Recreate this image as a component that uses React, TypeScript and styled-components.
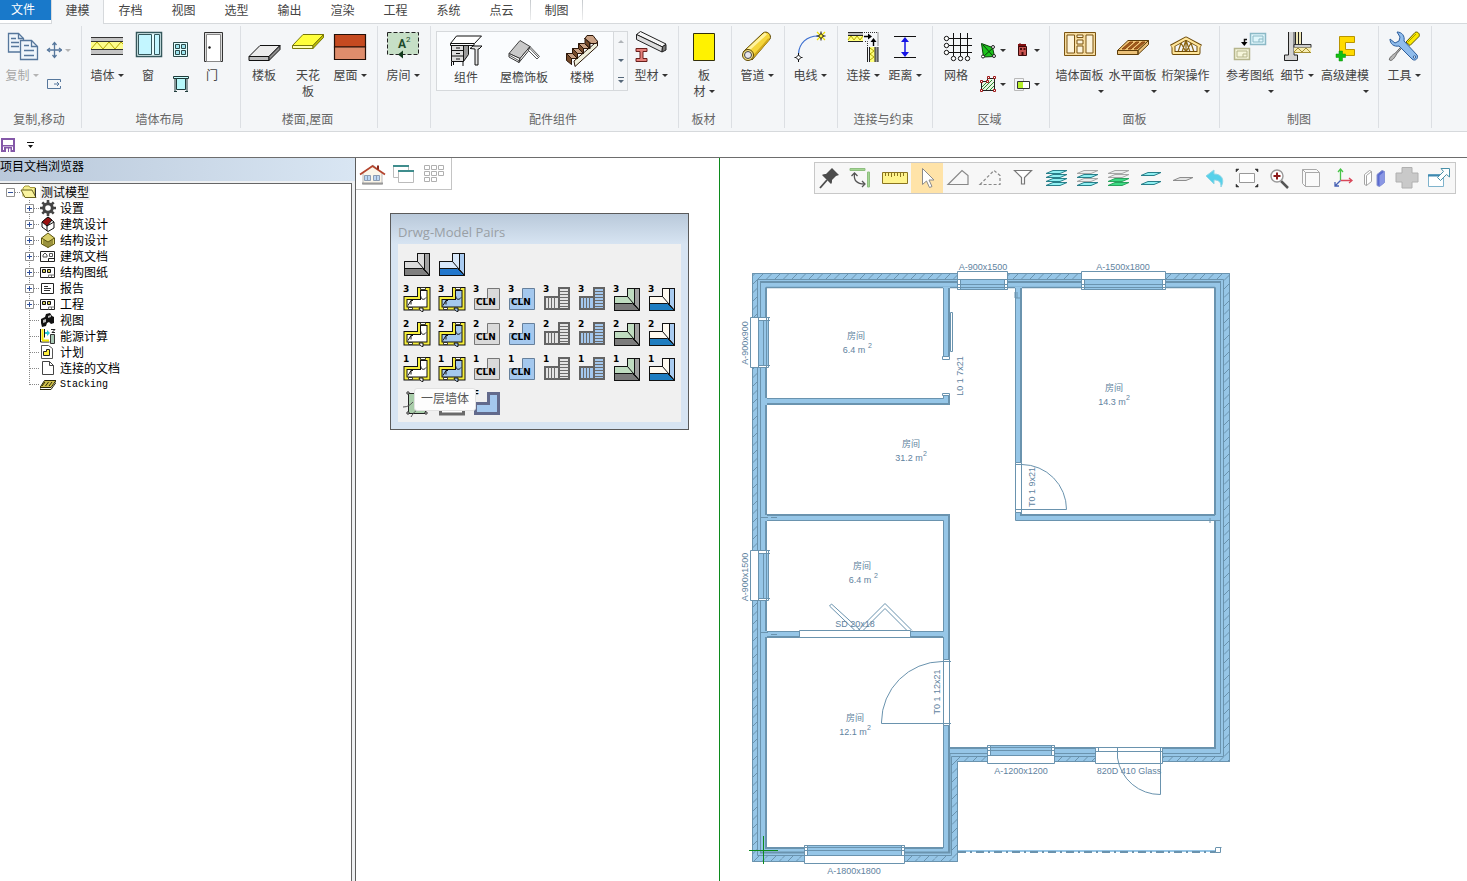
import React from "react";
import styled, { createGlobalStyle, css } from "styled-components";

const uiFont = `"Noto Sans CJK SC", "Open Sans", sans-serif`;
const LINE = "#6a93ae";
const WALL = "#96c6e7";

const GlobalStyle = createGlobalStyle`
  * { box-sizing: border-box; }
  body { margin: 0; font: 12px/16px ${uiFont}; color: #444; background: #fff; }
  button { font: inherit; color: inherit; background: none; border: 0; padding: 0; margin: 0; }
  svg { display: block; flex: none; }
`;

/* ---------- shell ---------- */

const Shell = styled.div`
  display: flex;
  flex-direction: column;
  height: 100vh;
  min-height: 640px;
  overflow: hidden;
`;

const TabBar = styled.nav`
  display: flex;
  height: 24px;
  flex: none;
  box-shadow: inset 0 -1px #d6d9dc;
`;

const FileTab = styled.button`
  width: 51px;
  height: 20px;
  padding: 0 5px 2px 0;
  color: #fff;
  background: #1979ca;
`;

const Tab = styled.button<{ $state?: "active" | "context" }>`
  width: 53px;
  height: 24px;
  padding-bottom: 5px;
  ${(p) =>
    p.$state === "active" &&
    css`
      background: #f4f6f8;
      border: solid #d6d9dc;
      border-width: 0 1px;
    `}
  ${(p) =>
    p.$state === "context" &&
    css`
      margin-left: 2px;
      height: 20px;
      padding-bottom: 1px;
      border: 1px solid;
      border-width: 0 1px;
      border-image: linear-gradient(#c4c8cc, #f0f0f0) 1;
    `}
`;

const Ribbon = styled.div`
  display: flex;
  flex: none;
  height: 108px;
  padding: 2px 0 3px;
  background: #f4f6f8;
  border-bottom: 1px solid #d6d9dc;
`;

const Group = styled.section<{ $w: number; $pad?: number }>`
  display: flex;
  flex-direction: column;
  flex: none;
  width: ${(p) => p.$w}px;
  padding-left: ${(p) => p.$pad ?? 0}px;
  border-right: 1px solid #dcdfe3;
`;

const GroupTools = styled.div`
  display: flex;
  align-items: flex-start;
  flex: 1;
  padding-top: 5px;
`;

const Caption = styled.div`
  height: 17px;
  padding-right: 3px;
  text-align: center;
  color: #666;
`;

const ToolButton = styled.button<{ $w: number; $off?: boolean; $tight?: boolean }>`
  display: flex;
  flex-direction: column;
  align-items: center;
  flex: none;
  gap: ${(p) => (p.$tight ? 2 : 4)}px;
  width: ${(p) => p.$w}px;
  color: ${(p) => (p.$off ? "#a6a6a6" : "#444")};
`;

const ToolLabel = styled.span`
  display: block;
  white-space: nowrap;
`;

const ArrowLine = styled.span`
  display: block;
  height: 16px;
  text-align: right;
`;

const CaretSvg = styled.svg`
  display: inline-block;
  vertical-align: 3px;
  margin-left: 3px;
`;

const SmallColumn = styled.div<{ $w: number }>`
  display: flex;
  flex-direction: column;
  gap: 16px;
  width: ${(p) => p.$w}px;
  padding-top: 10px;
`;

const SmallButton = styled.button<{ $center?: boolean }>`
  display: flex;
  align-items: center;
  justify-content: ${(p) => (p.$center ? "center" : "flex-start")};
  height: 18px;
`;

const Gallery = styled.div`
  display: flex;
  height: 60px;
  margin-left: 5px;
  background: #fafcfe;
  border: 1px solid #d6d9dc;
`;

const GalleryItems = styled.div`
  display: flex;
  padding: 3px 2px 0 0;
`;

const GalleryScroll = styled.div`
  display: flex;
  flex-direction: column;
  width: 14px;
  background: #f4f6f8;
  border-left: 1px solid #d6d9dc;
`;

const ScrollButton = styled.button`
  display: flex;
  flex: 1;
  align-items: center;
  justify-content: center;
`;

const QuickBar = styled.div`
  display: flex;
  align-items: center;
  gap: 12px;
  flex: none;
  height: 26px;
  padding-left: 1px;
  border-bottom: 1px solid #6d6d6d;
`;

const Main = styled.main`
  display: flex;
  flex: 1;
  min-height: 0;
`;

/* ---------- project browser ---------- */

const Browser = styled.aside`
  display: flex;
  flex-direction: column;
  flex: none;
  width: 356px;
  background: #eef0f2;
  border-right: 1px solid #5c5c5c;
`;

const BrowserTitle = styled.h2`
  height: 23px;
  margin: 0 0 2px;
  font: 12px/16px ${uiFont};
  color: #000;
  background: linear-gradient(90deg, #b9c8da, #d9e6f3);
`;

const TreeBox = styled.div`
  flex: 1;
  margin-right: 3px;
  background: #fff;
  border: solid #666;
  border-width: 1px 1px 0 0;
`;

const TreeList = styled.ul`
  margin: 0;
  padding: 0;
  list-style: none;
  color: #000;
`;

const TreeRow = styled.div<{ $child?: boolean }>`
  display: flex;
  align-items: center;
  height: 16px;
  padding-left: ${(p) => (p.$child ? 22 : 3)}px;
`;

const TreeText = styled.span<{ $selected?: boolean; $latin?: boolean }>`
  height: 16px;
  padding: 0 1px;
  margin-left: 3px;
  background: ${(p) => (p.$selected ? "#efefef" : "none")};
  ${(p) =>
    p.$latin &&
    css`
      font: 10px/18px "Liberation Mono", monospace;
    `}
`;

/* ---------- drawing area ---------- */

const Canvas = styled.section`
  position: relative;
  flex: 1;
  min-width: 0;
  overflow: hidden;
  background: #fff;
`;

const PlanSvg = styled.svg`
  position: absolute;
  inset: 0;
  width: 100%;
  height: 100%;
`;

const CanvasBar = styled.div`
  position: relative;
  display: flex;
  justify-content: space-between;
  align-items: flex-start;
  padding-right: 11px;
`;

const ViewBar = styled.div`
  display: flex;
  height: 32px;
  padding-right: 2px;
  background: #fff;
  border: solid #c4c4c4;
  border-width: 0 1px 1px 0;
`;

const ViewButton = styled.button`
  width: 31px;
  height: 31px;
`;

const EditBar = styled.div`
  display: flex;
  height: 32px;
  margin-top: 4px;
  background: #f7f7f7;
  border: 1px solid #c8c8c8;
`;

const EditButton = styled.button<{ $on?: boolean }>`
  width: 32px;
  height: 30px;
  background: ${(p) => (p.$on ? "#ffe3a8" : "none")};
`;

const Palette = styled.div`
  position: absolute;
  left: 34px;
  top: 55px;
  width: 299px;
  padding: 0 7px 7px;
  background: linear-gradient(#b9c9da, #d7e4f2 30px);
  border: 1px solid #5a5a5a;
`;

const PaletteTitle = styled.h3`
  height: 30px;
  margin: 0;
  padding-top: 9px;
  font: 13px/18px "Open Sans", sans-serif;
  color: #999fa5;
`;

const PaletteBody = styled.div`
  padding: 3px 1px 0;
  height: 178px;
  background: #f0f0f0;
`;

const PaletteRow = styled.div`
  display: flex;
`;

const PaletteButton = styled.button`
  width: 35px;
  height: 35px;
`;

const Tooltip = styled.div`
  position: absolute;
  left: 58px;
  top: 230px;
  padding: 1px 6px 4px;
  color: #575757;
  background: #fdfdfd;
  border: 1px solid #e2e2e2;
  border-radius: 3px;
`;

/* ---------- ribbon pieces ---------- */

const Caret = ({ color = "#333" }: { color?: string }) => (
  <CaretSvg width="6" height="3" viewBox="0 0 6 3">
    <path d="M0 0h6L3 3z" fill={color} />
  </CaretSvg>
);

type ToolProps = {
  w: number;
  icon: React.ReactNode;
  label: React.ReactNode;
  arrow?: "inline" | "below";
  off?: boolean;
  tight?: boolean;
};

const Tool = ({ w, icon, label, arrow, off, tight }: ToolProps) => (
  <ToolButton $w={w} $off={off} $tight={tight} disabled={off}>
    <svg width="32" height="32" viewBox="0 0 32 32" overflow="visible">
      {icon}
    </svg>
    <ToolLabel>
      {label}
      {arrow === "inline" && <Caret color={off ? "#b4b4b4" : "#333"} />}
      {arrow === "below" && (
        <ArrowLine>
          <Caret />
        </ArrowLine>
      )}
    </ToolLabel>
  </ToolButton>
);

const Small = ({
  name,
  icon,
  arrow,
  center,
  color,
}: {
  name: string;
  icon: React.ReactNode;
  arrow?: boolean;
  center?: boolean;
  color?: string;
}) => (
  <SmallButton aria-label={name} $center={center}>
    <svg width="18" height="18" viewBox="0 0 18 18">
      {icon}
    </svg>
    {arrow && <Caret color={color} />}
  </SmallButton>
);

const icons = {
  copy: (
    <g fill="#eef5fb" stroke="#56779c" strokeWidth="1.3">
      <path d="M2.5 2.5h10l5 5v13.500h-15z" />
      <path d="M12.500 2.500v5h5M5 7.500h5M5 11.500h8M5 15.500h8" fill="none" />
      <path d="M14.500 9.500h11l6 6v13h-17z" />
      <path d="M25.500 9.500v6h6M18 14.500h5M18 19.500h10M18 24.500h10" fill="none" />
    </g>
  ),
  wall: (
    <g>
      <path d="M0 6h32v18H0z" fill="#fdfd8c" />
      <path d="M0 7h32v4H0zM0 19h32v4H0z" fill="#c4c4c4" />
      <path d="M0 6.500h32M0 10.500h32M0 18.500h32M0 23.500h32" stroke="#333" />
      <path d="M0 18l6-7 6 7 6-7 6 7 6-7 2 2" fill="none" stroke="#b5a800" />
    </g>
  ),
  window: (
    <g stroke="#35585c">
      <path d="M4.500 1.500h25v24h-25z" fill="#e8feff" strokeWidth="1.500" />
      <path d="M6.500 3.500h13v20h-13zM22.500 3.500h5v20h-5z" fill="#c3f6ff" />
    </g>
  ),
  door: (
    <g stroke="#333">
      <path d="M8.500 1.500h18v29h-18z" fill="#dcdcdc" />
      <path d="M10.500 3.500h14v27h-14z" fill="#fff" stroke="#888" />
      <circle cx="13.500" cy="16.500" r="1.200" fill="#111" stroke="none" />
    </g>
  ),
  slab: (
    <g stroke="#111" strokeLinejoin="round">
      <path d="M1 25.500L12 14.500h20l-11 11z" fill="#ececec" />
      <path d="M1 25.500h20v4H1z" fill="#bdbdbd" />
      <path d="M21 25.500l11-11v4l-11 11z" fill="#8b8b8b" />
    </g>
  ),
  ceiling: (
    <g stroke="#77770a" strokeLinejoin="round">
      <path d="M0.500 14.500L11 3.500h20.500L21 14.500z" fill="#ffff3c" />
      <path d="M0.500 14.500H21v3H0.500z" fill="#ffffb4" />
      <path d="M21 14.500l10.500-11v3L21 17.500z" fill="#c0c000" />
    </g>
  ),
  roof: (
    <g stroke="#241008" strokeWidth="1.200">
      <path d="M.500 3.500h31v12.500H.500z" fill="#c54a20" />
      <path d="M.500 16h31v12.500H.500z" fill="#df8d6c" />
    </g>
  ),
  room: (
    <g>
      <path d="M.500 1.500h31v22H.500z" fill="#c6dfc6" stroke="#222" strokeDasharray="4 2" />
      <text x="11" y="17" fontSize="12" fontWeight="700" fontFamily="Roboto, sans-serif" fill="#1d4a2a">A</text>
      <text x="19" y="11" fontSize="8" fontFamily="Roboto, sans-serif" fill="#1d4a2a">2</text>
      <path d="M11 23.500l5-4v8z" fill="#123a1c" />
    </g>
  ),
  desk: (
    <g stroke="#111" strokeLinejoin="round">
      <path d="M.500 8.500l6-7.500h25l-7 7.500z" fill="#fff" />
      <path d="M1.500 10.500h12v16h-12z" fill="#ddd" />
      <path d="M13.500 10.500l5 0v9l-5 7z" fill="#999" />
      <path d="M1.500 15.500h12M1.500 21h12M6 13h4M6 18.500h4M6 24h4M1.500 27v4M3.500 27v3M13 27v4M.500 8.500v2H24v-2" fill="none" />
      <path d="M20 13.500l3-2.500h9l-3 3h-1v16h-3v-16z" fill="#e5e5e5" />
    </g>
  ),
  eave: (
    <g strokeLinejoin="round">
      <path d="M1 18.500L12 5.500l10 6-10 12z" fill="#c9c9c9" stroke="#444" />
      <path d="M1 18.500v3.500l10 5.500 1-4zM12 23.500l-1 4 9-11 2-5z" fill="#fff" stroke="#333" />
      <path d="M1 20l10.500 6M22 11.500l9.500 10M20.500 15.500l8.500 8.500 2.500-2.500M21.500 13l9 9.500" fill="none" stroke="#555" />
    </g>
  ),
  stairs: (
    <g stroke="#2b170a" strokeLinejoin="round">
      <path d="M9 31.500L31.500 11V6L8 26z" fill="#f0f0dc" />
      <path d="M.500 18.500h6l5 5h-6zM6.500 13.500h6l5 5h-6zM12.500 8.500h6l5 5h-6zM19 3.500l-.500 0h.500l6 0 0 0 5 5h-6z" fill="#c9a184" />
      <path d="M.500 18.500l5 5v6l-5-4zM6.500 13.500l5 5v5l-5-5zM12.500 8.500l5 5v5l-5-5zM19 3.500l5 5v5l-5-5z" fill="#754a2a" />
      <path d="M19 3.500L21 .500h6l4.500 6-1.500 2h-5z" fill="#c9a184" />
      <path d="M5.500 29.500v-6h6v-5h6v-5h6v-5h7" fill="none" />
    </g>
  ),
  profile: (
    <g strokeLinejoin="round">
      <path d="M1.500 3.500l4-3L31 13l-3.500 3z" fill="#f6f6f6" stroke="#222" />
      <path d="M1.500 3.500v5l25.500 12.500.5-5z" fill="#dedede" stroke="#222" />
      <path d="M27.500 15.500l3.500-2v5.500l-4 2z" fill="#777" stroke="#222" />
      <path d="M1 17.500h11v3H8v7h4v3H1v-3h4v-7H1z" fill="#e5807a" stroke="#6a1f1c" />
    </g>
  ),
  board: <path d="M5.500 2.500h21v27h-21z" fill="#fff200" stroke="#33300a" />,
  pipe: (
    <g stroke="#5a4300">
      <path d="M2 21L22 2c4-3 9 2 7 6L11 29z" fill="#f5d63b" />
      <path d="M7 19L25 2.500" stroke="#fff3a0" strokeWidth="3" />
      <path d="M13 25L28 8" stroke="#d0a81c" strokeWidth="2" />
      <circle cx="7" cy="24" r="5.500" fill="#fbe88a" />
      <circle cx="7" cy="24" r="3.500" fill="#e6e6ee" stroke="#444" />
    </g>
  ),
  wire: (
    <g fill="none">
      <path d="M4.500 23C5 12 13 5 24 5" stroke="#3c6fd0" strokeWidth="1.200" />
      <path d="M23 1l8 8M31 1l-8 8" stroke="#f0e000" strokeWidth="1.200" />
      <path d="M22.500 5h9M27 .500v9M.500 26.500h8M4.500 22v9" stroke="#111" />
      <path d="M27 2.500L29.500 5 27 7.500 24.500 5z" fill="#ffef3a" stroke="#111" />
      <path d="M4.500 24l2.500 2.500L4.500 29 2 26.500z" fill="#fff" stroke="#111" />
    </g>
  ),
  connect: (
    <g>
      <path d="M1 1h15v3H1z" fill="#b8b8b8" />
      <path d="M1 4h15v6H1z" fill="#ffff7d" />
      <path d="M1 1.500h15M1 4.500h15M1 10.500h15" stroke="#222" />
      <path d="M1 9l3-4 3 4 3-4 3 4 3-4" fill="none" stroke="#b5a800" />
      <path d="M28 16h3v15h-3z" fill="#999" />
      <path d="M22 16h6v15h-6z" fill="#ffff7d" />
      <path d="M20.500 16v15M22.500 16v15M28 16v15M31 16v15" stroke="#222" />
      <path d="M23 17l4 3-4 3 4 3-4 3" fill="none" stroke="#b5a800" />
      <path d="M17 1.500h14v14M20.500 15v-4.500H17" fill="none" stroke="#333" strokeDasharray="1 1" />
      <path d="M17 5.500h5M26.500 15v-5" stroke="#000" strokeWidth="1.400" />
      <path d="M21 2.500l4 3-4 3zM23.500 11l3-4 3 4z" />
    </g>
  ),
  distance: (
    <g>
      <path d="M5 5.500h22M5 26.500h22" stroke="#111" />
      <path d="M16 8v16" stroke="#1414e6" strokeWidth="1.500" />
      <path d="M16 6l4 5h-8zM16 26l4-5h-8z" fill="#1414e6" />
    </g>
  ),
  grid: (
    <g fill="none" stroke="#111">
      <path d="M13.500 2v23M20.500 2v23M27.500 2v23M9 7.500h23M9 14.500h23M9 21.500h23" />
      <g fill="#fff">
        <circle cx="6.500" cy="7.500" r="2.200" />
        <circle cx="6.500" cy="14.500" r="2.200" />
        <circle cx="6.500" cy="21.500" r="2.200" />
        <circle cx="13.500" cy="27.500" r="2.200" />
        <circle cx="20.500" cy="27.500" r="2.200" />
        <circle cx="27.500" cy="27.500" r="2.200" />
      </g>
    </g>
  ),
  wallPanel: (
    <g fill="#fdf4dc" stroke="#7b5512">
      <path d="M.500 1.500h31v23H.500z" fill="#f6dca0" />
      <path d="M3 4h7.500v18H3zM13 4h6v2.500h-6zM13 9h6v4h-6zM13 15h6v7h-6zM22 4h7v18h-7z" />
    </g>
  ),
  floorPanel: (
    <g stroke="#5c3c08" strokeLinejoin="round">
      <path d="M.500 19.500L11 9.500h20.500L21 19.500z" fill="#f5c878" />
      <path d="M.500 19.500H21v4H.500zM21 19.500l10.500-10v4L21 23.500z" fill="#ecc27a" />
      <path d="M5 18l8-7h3l-8 7zM11 18l8-7h3l-8 7zM17 18l8-7h3l-8 7z" fill="#a45a1c" stroke="#8a4a12" />
    </g>
  ),
  truss: (
    <g fill="none" strokeLinejoin="round">
      <path d="M16 8v13M8 21l3-9 5 9 5-9 3 9M12 21l4-12 4 12" stroke="#8a6410" strokeWidth="1.200" />
      <path d="M1 15.500L16 7.500l15 8M3.500 15v7h25v-7" stroke="#6e4a08" strokeWidth="4" />
      <path d="M1.500 15.500L16 7.500l14.500 8M3.500 14.500v7.500h25v-7.500" stroke="#ffe69a" strokeWidth="2" />
    </g>
  ),
  reference: (
    <g>
      <path d="M16.500 2.500h15v11h-15z" fill="#dff6fb" stroke="#8bb9c6" strokeWidth="1.500" />
      <path d="M19 5h10v6H19zM25 8h4M25 11V8" fill="none" stroke="#8bb9c6" />
      <path d="M.500 17.500h15v11H.500z" fill="#f5f5da" stroke="#b5b58c" strokeWidth="1.500" />
      <path d="M3 20h10v6H3zM9 23h4M9 26v-3" fill="none" stroke="#b5b58c" />
      <path d="M13 8.500h-2.500V12" fill="none" stroke="#111" strokeWidth="1.500" />
      <path d="M7 11h6.500l-3.200 4z" />
    </g>
  ),
  detail: (
    <g>
      <path d="M15 1h5v12h-5z" fill="#efe8b8" />
      <path d="M8 1h4v23h5v6H3v-6h5z" fill="#d4d4d4" />
      <path d="M7.500 1v23h-4v5.500h13V24H13V1M14.500 1v12M17.500 1v12M20.500 1v12" fill="none" stroke="#222" />
      <path d="M13 13.500h17v3H13z" fill="#ccc" stroke="#333" />
      <path d="M13 16.500h17v5H13z" fill="#f7edb0" />
      <path d="M13 21l4-4 4 4 4-4 4 4M13 21.500h17" fill="none" stroke="#a48d30" />
    </g>
  ),
  advanced: (
    <g>
      <path d="M10.500 5.500h15v6h-9v7h9v6h-15z" fill="#ffda00" stroke="#b89500" />
      <path d="M10 20v3H7v3.500h3v3.500h3.500v-3.500h3V23h-3v-3z" fill="#12c012" stroke="#0e8f0e" strokeWidth=".500" />
    </g>
  ),
  tools: (
    <g strokeLinejoin="round">
      <path d="M18 11l9-9.500c2-1.500 5.500 1 4 4L22 14.500z" fill="#fbe900" stroke="#5d5600" />
      <path d="M20 11l8-8" stroke="#a49a00" />
      <path d="M1.500 29c-1-2 4-6 6-7l7-8 1 1-7 8c-1 3-5 8-7 6z" fill="#b6b6b6" stroke="#666" />
      <path d="M9 1c5 0 8 4 7 9l13 14c2 3-2 7-5 4L11 15c-5 1-9-2-9-7l5 4 4-2 1-4z" fill="#8fbcec" stroke="#2d5e9c" />
      <circle cx="26.500" cy="26" r="1.200" fill="#fff" stroke="#2d5e9c" />
    </g>
  ),
};

const smallIcons = {
  move: (
    <g stroke="#56779c" fill="none" strokeWidth="1.300">
      <path d="M10.500 2v14M3.500 9h14" />
      <path d="M8.500 4l2-2.500 2 2.500M8.500 14l2 2.500 2-2.500M6 7L3.500 9 6 11M15 7l2.500 2-2.500 2" />
    </g>
  ),
  stretch: (
    <g stroke="#56779c" fill="none">
      <path d="M16.500 7V4.500h-13v9h13V11M10 9h5M13 7l2 2-2 2" />
    </g>
  ),
  pane: (
    <g stroke="#2c4a4a">
      <path d="M1.500 1.500h14v14h-14z" fill="#e0ffff" />
      <path d="M3.500 3.500h4v4h-4zM9.500 3.500h4v4h-4zM3.500 9.500h4v4h-4zM9.500 9.500h4v4h-4z" fill="#9ee6f0" />
    </g>
  ),
  opening: (
    <g stroke="#1f3a3a">
      <path d="M1.500 1.500h15v2h-15zM3 3.500v13M15 3.500v13" fill="#c8ffff" />
      <path d="M4.500 3.500h9v11h-9z" fill="#b6f8fa" />
      <path d="M2 16.500h3M13 16.500h3" />
    </g>
  ),
  areaFill: (
    <g>
      <path d="M2.500 2.500l11 4 2 9-11 .500z" fill="#1dc31d" stroke="#0a3d0a" />
      <path d="M4 4l10 11M14 7l-9 8" stroke="#0a3d0a" />
      <circle cx="15" cy="15" r="1.500" fill="#fff" stroke="#222" />
      <circle cx="14" cy="6" r="1.500" fill="#fff" stroke="#222" />
      <circle cx="4" cy="15.500" r="1.500" fill="#fff" stroke="#222" />
    </g>
  ),
  areaHatch: (
    <g>
      <path d="M2.500 6.500h6v-3h7v12h-13z" fill="#e9f5e5" stroke="#222" />
      <path d="M3 12l5-5M3 15L13 5M7 15l8-8M11 15l4-4" stroke="#2d8a2d" />
      <path d="M1.500 5.500h2v2h-2zM7.500 5.500h2v2h-2zM8.500 1.500h2v2h-2zM14.500 1.500h2v2h-2zM14.500 14.500h2v2h-2zM1.500 14.500h2v2h-2z" fill="#fff" stroke="#a01818" />
    </g>
  ),
  building: (
    <g>
      <path d="M5 3h1l1-1 1 1h5v3H5z" fill="#7e1010" />
      <path d="M5.500 5.500h8v9h-8z" fill="#c85450" stroke="#3a0a0a" />
      <path d="M7 7h2v2H7zM10.500 7h2v2h-2zM8.500 11h2v3.500h-2z" fill="#4a0c0c" />
    </g>
  ),
  overlap: (
    <g>
      <path d="M1.500 3.500h9v12h-9z" fill="none" stroke="#b9b9b9" />
      <path d="M4.500 6.500h12v7h-12z" fill="#fff" stroke="#333" />
      <path d="M5 7h5v6H5z" fill="#b6f02a" />
    </g>
  ),
};

/* ---------- tree ---------- */

const ExpandBox = ({ x, minus }: { x: number; minus?: boolean }) => (
  <g>
    <path d={`M${x + 0.5} 4.500h8v8h-8z`} fill="#fff" stroke="#919191" />
    <path d={`M${x + 2} 8.500h5${minus ? "" : `M${x + 4.5} 6v5`}`} stroke="#2f4f9b" />
  </g>
);

const sheet = <path d="M.500 3.500h14v10H.500z" fill="#fff" stroke="#222" />;

const drawingSheet = (
  <g>
    {sheet}
    <path d="M2.500 5.500h3v3h-3zM7.500 5.500h3v3h-3z" fill="#d8d05c" stroke="#111" />
    <path d="M8.500 13.500v-2.500h6M11.500 11v2" fill="none" stroke="#777" />
  </g>
);

const treeItems: { text: string; leaf?: boolean; latin?: boolean; icon: React.ReactNode }[] = [
  {
    text: "设置",
    icon: (
      <g>
        <circle cx="8" cy="8" r="4.300" fill="none" stroke="#444" strokeWidth="3" />
        <path d="M8 0v3M8 13v3M0 8h3M13 8h3M2.300 2.300l2 2M11.700 11.700l2 2M2.300 13.700l2-2M11.700 4.300l2-2" stroke="#444" strokeWidth="2.600" />
      </g>
    ),
  },
  {
    text: "建筑设计",
    icon: (
      <g stroke="#111" strokeLinejoin="round">
        <path d="M2 6l6-5 6 5v6l-6 3.500L2 11z" fill="#fff" />
        <path d="M2 6l6-5 4 3-5 6z" fill="#9a1010" />
        <path d="M7 10v5M7 10l7-4" />
      </g>
    ),
  },
  {
    text: "结构设计",
    icon: (
      <g stroke="#5b5410" strokeLinejoin="round">
        <path d="M1.500 6l6.500-5 6.500 5v6L8 15.500 1.500 12z" fill="#d9cf6a" />
        <path d="M1.500 6L8 10l6.500-4M8 10v5.500M4 8v5M6 9v5M10 9v5M12 8v5" fill="none" />
      </g>
    ),
  },
  {
    text: "建筑文档",
    icon: (
      <g>
        {sheet}
        <path d="M3 9V7l2-2 2 2v2zM9.500 5.500h3v3h-3z" fill="none" stroke="#555" />
        <path d="M8.500 13.500v-3h6" fill="none" stroke="#222" />
      </g>
    ),
  },
  { text: "结构图纸", icon: drawingSheet },
  {
    text: "报告",
    icon: (
      <g>
        <path d="M1.500 3.500h12v10h-12z" fill="#fff" stroke="#222" />
        <path d="M4 6.500h4M4 8.500h7M4 10.500h6" stroke="#333" />
      </g>
    ),
  },
  { text: "工程", icon: drawingSheet },
  {
    text: "视图",
    leaf: true,
    icon: (
      <g>
        <path d="M1 7l4-2 1-3 4-1 2 3 2 1v6l-3 1-2-2-2 1-1 3-4 1-1-4z" fill="#111" />
        <path d="M3 8l3-1v3l-3 1zM8 4l3-1v2L8 6z" fill="#b8b8b8" />
      </g>
    ),
  },
  {
    text: "能源计算",
    leaf: true,
    icon: (
      <g>
        <path d="M.500 1v13h9M4.500 1v8.500" fill="none" stroke="#111" />
        <path d="M2.500 1v11M2 12.500h7" stroke="#f2e600" strokeWidth="2" />
        <path d="M5 4h2V2l3 3-3 3V6H5z" fill="#25c6d6" />
        <path d="M10.500 6.500h4v9h-4z" fill="#a9c9b5" stroke="#333" />
        <path d="M11 1.500h4l-3 3h3" fill="none" stroke="#222" />
      </g>
    ),
  },
  {
    text: "计划",
    leaf: true,
    icon: (
      <g>
        <path d="M1.500 1.500h7l4 3v10h-11z" fill="#fff" stroke="#555" />
        <path d="M3.500 7.500h3v-2h3v6h-6z" fill="#ffef3c" stroke="#222" />
      </g>
    ),
  },
  {
    text: "连接的文档",
    leaf: true,
    icon: (
      <g>
        <path d="M2.500 1.500h7l4 4v9h-11z" fill="#fff" stroke="#444" />
        <path d="M9.500 1.500v4h4" fill="none" stroke="#444" />
      </g>
    ),
  },
  {
    text: "Stacking",
    leaf: true,
    latin: true,
    icon: (
      <g stroke="#2c2a0a" strokeLinejoin="round">
        <path d="M0 11.500L4.500 4.500H16L11 11.500z" fill="#cfc04a" />
        <path d="M0 11.500v2h11l5-7v-2M5 6l-3 4M8.500 6l-3 4M12 6L9 10" fill="none" />
      </g>
    ),
  },
];

const Tree = () => (
  <TreeList role="tree">
    <li role="treeitem" aria-expanded="true">
      <TreeRow>
        <button aria-label="折叠">
          <svg width="17" height="16" viewBox="0 0 17 16">
            <path d="M12 8.500h5" stroke="#888" strokeDasharray="1 1" />
            <ExpandBox x={3} minus />
          </svg>
        </button>
        <svg width="17" height="16" viewBox="-1 0 17 16">
          <path d="M2 12.500V4l2-2h4l1 1.500h5v9" fill="#f4ee8e" stroke="#a59a3a" />
          <path d="M0 6h11l4 7.500H4z" fill="#faf4a0" stroke="#6b6420" />
          <path d="M14.500 4v9" stroke="#333" />
        </svg>
        <TreeText $selected>测试模型</TreeText>
      </TreeRow>
      <TreeList role="group">
        {treeItems.map((it, i) => {
          const last = i === treeItems.length - 1;
          const guide = (
            <svg width="18" height="16" viewBox="0 0 18 16">
              <path d={`M7.500 0v${last ? 9 : 16}M8 8.500h10`} stroke="#888" strokeDasharray="1 1" />
              {!it.leaf && <ExpandBox x={3} />}
            </svg>
          );
          return (
            <li key={it.text} role="treeitem">
              <TreeRow $child>
                {it.leaf ? guide : <button aria-label={"展开" + it.text}>{guide}</button>}
                <svg width="16" height="16" viewBox="0 0 16 16">
                  {it.icon}
                </svg>
                <TreeText $latin={it.latin}>{it.text}</TreeText>
              </TreeRow>
            </li>
          );
        })}
      </TreeList>
    </li>
  </TreeList>
);

/* ---------- view and edit bars ---------- */

const viewIcons: [string, React.ReactNode][] = [
  [
    "主页",
    <g>
      <path d="M7 15v11h19V15l-9-8z" fill="#fbf6ea" stroke="#bbb" />
      <path d="M6 25.500h21" stroke="#999" strokeWidth="2" />
      <path d="M4 16.500l12.500-8.500L29 16.500" fill="none" stroke="#b5452e" strokeWidth="1.800" />
      <path d="M21 7.500h2v4h-2z" fill="#8b2a1c" />
      <path d="M8.500 17.500h6v5h-6zM17.500 17.500h6v5h-6z" fill="#bcd6f3" stroke="#8b9db5" />
      <path d="M11.500 17.500v5M20.500 17.500v5" stroke="#8b9db5" />
    </g>,
  ],
  [
    "窗口",
    <g>
      <path d="M6.500 7.500h15v12h-15z" fill="#fff" stroke="#bbb" />
      <path d="M6 8h16" stroke="#3f8d8d" strokeWidth="2" />
      <path d="M11.500 12.500h15v12h-15z" fill="#fff" stroke="#bbb" />
      <path d="M11 13h16" stroke="#3f8d8d" strokeWidth="2" />
    </g>,
  ],
  [
    "平铺",
    <path
      d="M6.500 7.500h5v4h-5zM13.500 7.500h5v4h-5zM20.500 7.500h5v4h-5zM6.500 13.500h5v4h-5zM13.500 13.500h5v4h-5zM20.500 13.500h5v4h-5zM6.500 19.500h5v4h-5zM13.500 19.500h5v4h-5z"
      fill="none"
      stroke="#b0b0b0"
    />,
  ],
];

const Layers = ({ x, tones }: { x: number; tones: string[] }) => (
  <g>
    {tones
      .map((t, i) => ({ t, y: 7 + i * 4 }))
      .reverse()
      .map(({ t, y }) => (
        <path
          key={y}
          d={`M${x} ${y + 3.5}l7-3h14l-7 3z`}
          fill={t === "teal" ? "#8ff0f2" : t === "green" ? "#3ddc84" : "#ececec"}
          stroke={t === "teal" ? "#287f8a" : t === "green" ? "#2aa35e" : "#a6a6a6"}
        />
      ))}
  </g>
);

const editIcons: [string, React.ReactNode][] = [
  [
    "固定",
    <g>
      <path d="M17 5l7 7-3 1-4 4c0 2 0 3-1 4l-9-9c1-1 3-1 4-1l4-4z" fill="#4c4c4c" />
      <path d="M12 17l-7 8" stroke="#4c4c4c" strokeWidth="1.800" />
    </g>,
  ],
  [
    "旋转",
    <g fill="none">
      <path d="M3 5.500h15v2H3zM20.500 9h2v15h-2z" fill="#a4d694" stroke="#8fbf80" />
      <path d="M7.500 11c-1 6 2 10 10 10" stroke="#555" strokeWidth="1.300" />
      <path d="M4.500 13l3-3 3 3M15 18l3 3-3 3" stroke="#555" strokeWidth="1.300" />
    </g>,
  ],
  [
    "测量",
    <g>
      <path d="M3.500 9.500h25v11h-25z" fill="#fff48c" stroke="#8a7420" />
      <path d="M6.500 10v3M9.500 10v3M12.500 10v4M15.500 10v3M18.500 10v3M21.500 10v4M24.500 10v3" stroke="#8a7420" />
    </g>,
  ],
  ["选择", <path d="M11.500 5.500v16l4-3.500 3 6.500 2.500-1-3-6.500h5z" fill="#fff" stroke="#8a8a8a" />],
  ["多边形", <path d="M5 21.500L19 7.500l6 5v9z" fill="none" stroke="#888" strokeWidth="1.200" />],
  ["虚线多边形", <path d="M5 21.500L19 7.500l6 5v9z" fill="none" stroke="#888" strokeWidth="1.200" strokeDasharray="3 2" />],
  ["筛选", <path d="M7.500 7.500h17l-7 7v6.500h-3V14.500z" fill="#fff" stroke="#777" strokeWidth="1.200" />],
  ["图层一", <Layers x={7} tones={["teal", "teal", "teal", "teal"]} />],
  ["图层二", <Layers x={6} tones={["grey", "teal", "grey", "teal"]} />],
  ["图层三", <Layers x={5} tones={["grey", "grey", "green", "green"]} />],
  [
    "图层四",
    <g fill="#8ff0f2" stroke="#287f8a">
      <path d="M6 12.500l7-3h13l-7 3zM6 21.500l7-3h13l-7 3z" />
    </g>,
  ],
  ["图层五", <path d="M6 17.500l7-3h13l-7 3z" fill="#e4e4e4" stroke="#8d8d8d" />],
  ["撤销", <path d="M7 13l8-6v4c8 0 11 6 7 13 0-5-2-7-7-7v4z" fill="#57d1ea" stroke="#8fd6e6" />],
  [
    "缩放范围",
    <g>
      <path d="M8.500 10.500h15v9h-15z" fill="#fff" stroke="#999" />
      <path d="M5 9V6h3zM24 6h3v3zM5 21v3h3zM27 21v3h-3z" fill="#333" stroke="#333" strokeWidth=".500" />
    </g>,
  ],
  [
    "放大",
    <g>
      <path d="M18 18l7 7" stroke="#555" strokeWidth="2.500" />
      <circle cx="14" cy="13" r="6" fill="#fff" stroke="#999" strokeWidth="1.400" />
      <path d="M14 9.500v7M10.500 13h7" stroke="#8e1c1c" strokeWidth="2" />
    </g>,
  ],
  [
    "立方体",
    <path d="M7.500 6.500h14l3 3v14h-14l-3-3zM10.500 9.500h14M10.500 9.500v14M7.500 6.500l3 3" fill="#fafafa" stroke="#a9a9a9" />,
  ],
  [
    "坐标轴",
    <g fill="none" strokeWidth="1.300">
      <path d="M13.500 17V6M11 9l2.500-3L16 9" stroke="#47c447" />
      <path d="M13.500 17.500H25M22 15l3 2.500-3 2.500" stroke="#d9485a" />
      <path d="M13.500 17.500l-5 5M8 19v4h4" stroke="#4560b4" />
    </g>,
  ],
  [
    "剖面",
    <g>
      <path d="M5.500 11.500l5-4 2 1v10l-5 4-2-1zM7.500 12.500v10M7.500 12.500l5-4" fill="#fff" stroke="#a5a5a5" />
      <path d="M18 11.500l5-4 2.500 1v11l-5 4-2.500-1z" fill="#5a6bd0" stroke="#8994cf" />
      <path d="M20.500 12.500l5-4v11l-5 4z" fill="#8a97e4" />
    </g>,
  ],
  ["添加", <path d="M11 4.500h10v5.500h6v9h-6v6H11v-6H5v-9h6z" fill="#c9c9c9" stroke="#b0b0b0" />],
  [
    "弹出",
    <g fill="#fff" stroke="#4a90a8">
      <path d="M5.500 11.500h15v12h-15z" stroke="#7fb3cc" />
      <path d="M5 12.500h15" stroke="#3f89b0" strokeWidth="2" />
      <path d="M18 5.500h8.500V14l-3-2.500-6 6-3-3 6-6z" />
    </g>,
  ],
];

/* ---------- palette icons ---------- */

const Floor = ({ n }: { n?: number | string }) =>
  n ? (
    <text x="4" y="10" fontSize="9" fontWeight="700" fontFamily='"DejaVu Sans", sans-serif' fill="#000">
      {n}
    </text>
  ) : null;

const CornerIcon = ({ n, light, low, side }: { n?: number; light: string; low: string; side: string }) => (
  <g stroke="#111">
    <path d="M18.500 6.500h12v22h-25v-14h13z" fill={light} />
    <path d="M5.500 21.500h18l7 7h-25z" fill={low} />
    <path d="M25.500 6.500h5v22l-5-6z" fill={side} />
    <path d="M18.500 14.500l12 14" />
    <path d="M18.500 6.500h12v22h-25v-14h13z" fill="none" />
    <g stroke="none">
      <Floor n={n} />
    </g>
  </g>
);

const WallIcon = ({ n, fill }: { n: number; fill: string }) => (
  <g>
    <path d="M20 7h9.500v19.500h-23V16H20z" fill={fill} stroke="#111" strokeWidth="4" />
    <path d="M20 7h9.500v19.500h-23V16H20z" fill="none" stroke="#f6ee3c" strokeWidth="2" />
    <path d="M9 23.500l3-5v4M12 18.500h2M22 14.500c0 3 3 4 5 1" fill="none" stroke="#111" />
    <path d="M21.500 5.500h5v2h-5zM9.500 25.500h4v2h-4z" fill="#fff" stroke="#111" strokeWidth=".800" />
    <path d="M20 26h4v3.500c-2 0-3-1-4-3.500z" fill={fill} stroke="#111" />
    <Floor n={n} />
  </g>
);

const ClnIcon = ({ n, fill, edge }: { n: number; fill: string; edge: string }) => (
  <g>
    <path d="M18.500 6.500h12v21h-25v-11h13z" fill={fill} stroke={edge} />
    <Floor n={n} />
    <text x="7" y="23" fontSize="9" fontWeight="700" fontFamily='"DejaVu Sans", sans-serif' fill="#000">
      CLN
    </text>
  </g>
);

const StripeIcon = ({ n, fill }: { n: number; fill: string }) => (
  <g>
    <path d="M20 6h10v21H6V15h14z" fill={fill} stroke="#636363" strokeWidth="2" />
    <path d="M20 9.500h10M20 12.500h10M20 15.500h10M20 18.500h10M20 21.500h10M20 24.500h10M9.500 15v12M12.500 15v12M15.500 15v12" stroke="#6b6b6b" />
    <path d="M20 7v19" stroke="#636363" strokeWidth="2" />
    <Floor n={n} />
  </g>
);

const cell = (name: string, icon: React.ReactNode) => (
  <PaletteButton key={name} aria-label={name}>
    <svg width="35" height="35" viewBox="0 0 35 35">
      {icon}
    </svg>
  </PaletteButton>
);

const PairsPalette = () => (
  <Palette>
    <PaletteTitle>Drwg-Model Pairs</PaletteTitle>
    <PaletteBody>
      <PaletteRow>
        {cell("屋顶", <CornerIcon light="#dcdcdc" low="#7f7f7f" side="#a2a2a2" />)}
        {cell("屋顶模型", <CornerIcon light="#d8e8fa" low="#2277cc" side="#a9cbf0" />)}
      </PaletteRow>
      {[3, 2, 1].map((n) => (
        <PaletteRow key={n}>
          {cell(`${n}层墙体`, <WallIcon n={n} fill="#fff" />)}
          {cell(`${n}层墙体模型`, <WallIcon n={n} fill="#a4c8ee" />)}
          {cell(`${n}层天花`, <ClnIcon n={n} fill="#dadada" edge="#777" />)}
          {cell(`${n}层天花模型`, <ClnIcon n={n} fill="#a4c8ee" edge="#66809c" />)}
          {cell(`${n}层楼板`, <StripeIcon n={n} fill="#e4e4e4" />)}
          {cell(`${n}层楼板模型`, <StripeIcon n={n} fill="#a4c8ee" />)}
          {cell(`${n}层屋面`, <CornerIcon n={n} light="#bfdcc0" low="#7b7b7b" side="#a0a0a0" />)}
          {cell(`${n}层屋面模型`, <CornerIcon n={n} light="#fffaf0" low="#1f7dc0" side="#a9cbf0" />)}
        </PaletteRow>
      ))}
      <PaletteRow>
        {cell(
          "场地",
          <g>
            <path d="M9.500 6.500h17v20h-17z" fill="#a9cdaa" stroke="#222" />
            <path d="M4 20c5 0 7-2 10-5M12 30c3-5 5-7 9-9" fill="none" stroke="#555" />
            <g fill="#fff" stroke="#222">
              <circle cx="9" cy="6" r="1.200" />
              <circle cx="9" cy="26" r="1.200" />
              <circle cx="27" cy="26" r="1.200" />
            </g>
          </g>
        )}
        {cell("基础", <path d="M19.500 7h10v20h-23v-12h13z" fill="#fff" stroke="#6a6a6a" strokeWidth="3" />)}
        {cell(
          "基础模型",
          <g>
            <path d="M19.500 6.500h10v20h-23v-10h13z" fill="#a4c8ee" stroke="#626a8c" strokeWidth="3" />
            <Floor n="F" />
          </g>
        )}
      </PaletteRow>
    </PaletteBody>
  </Palette>
);

/* ---------- floor plan ---------- */

const box = (x1: number, y1: number, x2: number, y2: number) => `M${x1} ${y1}H${x2}V${y2}H${x1}z`;

/* White sill outside, glazed frame inside; the frame sits on the room side of the wall. */
const HWindow = ({ x1, x2, sill, y1, y2 }: { x1: number; x2: number; sill: number; y1: number; y2: number }) => {
  const top = Math.min(y1, sill);
  const bottom = Math.max(y2, sill);
  return (
    <g stroke={LINE}>
      <path d={box(x1, top, x2, bottom)} fill="#fff" />
      <path d={box(x1 + 3, y1, x2 - 3, y2)} fill={WALL} />
      <path d={`M${x1} ${y1}H${x2}M${x1} ${y2}H${x2}M${x1} ${(y1 + y2) / 2}H${x2}M${x1} ${sill < y1 ? y2 - 2 : y1 + 2}H${x2}`} />
    </g>
  );
};

const VWindow = ({ y1, y2 }: { y1: number; y2: number }) => (
  <g stroke={LINE}>
    <path d={box(750.5, y1, 768.5, y2)} fill="#fff" />
    <path d={box(758.5, y1 + 3, 768.5, y2 - 2)} fill={WALL} />
    <path d={`M758.500 ${y1}V${y2}M763.500 ${y1 + 3}V${y2 - 2}M766.500 ${y1}V${y2}M758 ${y1}H770M758 ${y2 - 2}H770M758 ${y1 + 3}H770`} />
  </g>
);

const rooms = [
  { x: 856, y: 336, area: "6.4 m" },
  { x: 911, y: 444, area: "31.2 m" },
  { x: 1114, y: 388, area: "14.3 m" },
  { x: 862, y: 566, area: "6.4 m" },
  { x: 855, y: 718, area: "12.1 m" },
];

const labels: [number, number, string][] = [
  [983, 270, "A-900x1500"],
  [1123, 270, "A-1500x1800"],
  [855, 627, "SD 20x18"],
  [1021, 774, "A-1200x1200"],
  [1129, 774, "820D 410 Glass"],
  [854, 874, "A-1800x1800"],
];

const sideLabels: [number, number, string][] = [
  [748, 343, "A-900x900"],
  [748, 577, "A-900x1500"],
  [963, 376, "L0 1 7x21"],
  [1035, 487, "T0 1 9x21"],
  [940, 692, "T0 1 12x21"],
];

const FloorPlan = () => (
  <PlanSvg>
    <defs>
      <pattern id="brick" width="17" height="17" patternUnits="userSpaceOnUse">
        <path d="M0 17L17 0M0 8.500L8.500 0M8.500 17L17 8.500" stroke={LINE} />
      </pattern>
    </defs>
    <line x1="363.500" x2="363.500" y1="0" y2="100%" stroke="#0c8a1c" />
    <g transform="translate(-356 -158)" fill="none" stroke={LINE}>
      {/* external walls */}
      <path
        fillRule="evenodd"
        fill={WALL}
        d="M752.500 273.500H1229.500V761.500H957.500V861.500H752.500zM766 287.500V848H944V748H1215V287.500z"
      />
      <path
        fillRule="evenodd"
        fill="url(#brick)"
        d="M752.500 273.500H1229.500V761.500H957.500V861.500H752.500zM757.500 279.500V855.500H951.500V756.500H1223.500V279.500z"
      />
      <path d="M760.500 282V852.500H949.500V753.500H1220.500V282z" />
      <path d="M760 282H1221M760 852.500H949.500V753.500" strokeWidth="2" />
      <path d="M766 287.500V848H944M949 748H1215V287.500" strokeWidth="2" />
      <path d="M766 287.500H1215" strokeWidth="1.500" />

      {/* internal walls */}
      <g fill={WALL} stroke="none">
        <path d={box(943, 287, 950, 357)} />
        <path d={box(765, 398, 950, 405)} />
        <path d={box(943, 395, 950, 404)} />
        <path d={box(765, 515, 950, 521)} />
        <path d={box(943, 515, 950, 660)} />
        <path d={box(765, 631, 944, 637)} />
        <path d={box(943, 725, 950, 849)} />
        <path d={box(1015, 287, 1022, 463)} />
        <path d={box(1015, 512, 1022, 520)} />
        <path d={box(1015, 515, 1216, 520)} />
      </g>
      <path d="M943.500 288V356M943.500 395V398.500H767M767 520.500H943.500V631.500M943.500 637V660M943.500 725V848M767 631.500H943.500M1015.500 288V520.500H1220" />
      <path d="M949 288V356M949 395V404H767M767 515H949V660M767 637H943M949 725V852M1021 288V463M1021 512V515H1215" strokeWidth="2" />
      <path d="M761 517.500H768M771 517.500H777M761 632.500H768M771 634.500H777M1207 520.500H1220M1210 518V523M1015 292V298H1021M1017 292V298" />

      {/* windows */}
      <HWindow x1={957.5} x2={1007.5} sill={271.5} y1={279.5} y2={289.5} />
      <HWindow x1={1081.5} x2={1165.5} sill={271.5} y1={279.5} y2={289.5} />
      <HWindow x1={987.5} x2={1054.5} sill={763.5} y1={745.5} y2={755.5} />
      <HWindow x1={804.5} x2={904.5} sill={863.5} y1={845.5} y2={855.5} />
      <VWindow y1={317.5} y2={367.5} />
      <VWindow y1={550.5} y2={600.5} />

      {/* doors */}
      <g fill="#fff">
        <path d={box(942.5, 356.5, 949.5, 359.5)} />
        <path d={box(942.5, 393.5, 949.5, 395.5)} />
        <path d={box(950.5, 312.5, 952.5, 351.5)} />
        <path d={box(799.5, 630.5, 910.5, 637.5)} />
        <path d={box(943.5, 659.5, 949.5, 725.5)} />
        <path d={box(1015.5, 462.5, 1021.5, 512.5)} />
        <path d={box(1095.5, 747.5, 1162.5, 763.5)} />
      </g>
      <path d="M1096 751.500H1162M1098.500 748V751M1117.500 748V758A43 43 0 0 0 1160.500 794.500V748" />
      <path d="M1015 464.500H1022A45 45 0 0 1 1066.500 509.500H1015" />
      <path d="M951 661.500H942A61 61 0 0 0 881.500 722V723.500H951" />
      <path d="M829.500 606l2-2L860 630M829.500 606L855 630.500M858 630.500l27-27 27 27M863 630.500l22-22 22 22" />

      {/* verandah beam and post */}
      <path d="M958 851H1216" stroke={WALL} strokeWidth="2" />
      <path d="M958 852H1216" strokeDasharray="8 4 2 4" strokeWidth="2" />
      <path d="M1215.500 847.500h6M1215.500 848v4.500h5v-5" fill="#fff" />

      {/* labels */}
      <g stroke="none" fill="#5f83a0" fontSize="9" textAnchor="middle" fontFamily='"Liberation Sans", "Noto Sans CJK SC", sans-serif'>
        {rooms.map((r) => (
          <g key={`${r.x}-${r.y}`}>
            <text x={r.x} y={r.y + 3}>
              房间
            </text>
            <text x={r.x - 2} y={r.y + 17}>
              {r.area}
            </text>
            <text x={r.x + 14} y={r.y + 12} fontSize="7">
              2
            </text>
          </g>
        ))}
        {labels.map(([x, y, t]) => (
          <text key={t} x={x} y={y}>
            {t}
          </text>
        ))}
        {sideLabels.map(([x, y, t]) => (
          <text key={t} transform={`translate(${x} ${y}) rotate(-90)`}>
            {t}
          </text>
        ))}
      </g>

      {/* origin marker */}
      <path d="M749 850.500H778M763.500 836V864" stroke="#0c8a1c" />
    </g>
  </PlanSvg>
);

/* ---------- page ---------- */

const tabs = ["存档", "视图", "选型", "输出", "渲染", "工程", "系统", "点云"];

export default function App() {
  return (
    <Shell>
      <GlobalStyle />
      <TabBar>
        <FileTab>文件</FileTab>
        <Tab $state="active">建模</Tab>
        {tabs.map((t) => (
          <Tab key={t}>{t}</Tab>
        ))}
        <Tab $state="context">制图</Tab>
      </TabBar>

      <Ribbon>
        <Group $w={82}>
          <GroupTools>
            <Tool w={44} icon={icons.copy} label="复制" arrow="inline" off />
            <SmallColumn $w={32}>
              <Small name="移动" icon={smallIcons.move} arrow color="#b4b4b4" />
              <Small name="拉伸" icon={smallIcons.stretch} />
            </SmallColumn>
          </GroupTools>
          <Caption>复制,移动</Caption>
        </Group>
        <Group $w={159}>
          <GroupTools>
            <Tool w={50} icon={icons.wall} label="墙体" arrow="inline" />
            <Tool w={32} icon={icons.window} label="窗" />
            <SmallColumn $w={34}>
              <Small name="窗格" icon={smallIcons.pane} center />
              <Small name="洞口" icon={smallIcons.opening} center />
            </SmallColumn>
            <Tool w={28} icon={icons.door} label="门" />
          </GroupTools>
          <Caption>墙体布局</Caption>
        </Group>
        <Group $w={137}>
          <GroupTools>
            <Tool w={46} icon={icons.slab} label="楼板" />
            <Tool w={42} icon={icons.ceiling} label={<>天花<br />板</>} />
            <Tool w={42} icon={icons.roof} label="屋面" arrow="inline" />
          </GroupTools>
          <Caption>楼面,屋面</Caption>
        </Group>
        <Group $w={53}>
          <GroupTools>
            <Tool w={50} icon={icons.room} label="房间" arrow="inline" />
          </GroupTools>
        </Group>
        <Group $w={248}>
          <GroupTools>
            <Gallery>
              <GalleryItems>
                <Tool w={58} icon={icons.desk} label="组件" tight />
                <Tool w={58} icon={icons.eave} label="屋檐饰板" tight />
                <Tool w={58} icon={icons.stairs} label="楼梯" tight />
              </GalleryItems>
              <GalleryScroll>
                <ScrollButton aria-label="向上">
                  <svg width="6" height="3" viewBox="0 0 6 3"><path d="M0 3h6L3 0z" fill="#b0b4b8" /></svg>
                </ScrollButton>
                <ScrollButton aria-label="向下">
                  <svg width="6" height="3" viewBox="0 0 6 3"><path d="M0 0h6L3 3z" fill="#56687a" /></svg>
                </ScrollButton>
                <ScrollButton aria-label="更多">
                  <svg width="6" height="6" viewBox="0 0 6 6"><path d="M0 0h6v1H0zM0 3h6L3 6z" fill="#56687a" /></svg>
                </ScrollButton>
              </GalleryScroll>
            </Gallery>
            <Tool w={46} icon={icons.profile} label="型材" arrow="inline" />
          </GroupTools>
          <Caption>配件组件</Caption>
        </Group>
        <Group $w={53}>
          <GroupTools>
            <Tool w={50} icon={icons.board} label={<>板<br />材</>} arrow="inline" />
          </GroupTools>
          <Caption>板材</Caption>
        </Group>
        <Group $w={53}>
          <GroupTools>
            <Tool w={50} icon={icons.pipe} label="管道" arrow="inline" />
          </GroupTools>
        </Group>
        <Group $w={53}>
          <GroupTools>
            <Tool w={50} icon={icons.wire} label="电线" arrow="inline" />
          </GroupTools>
        </Group>
        <Group $w={95}>
          <GroupTools>
            <Tool w={50} icon={icons.connect} label="连接" arrow="inline" />
            <Tool w={34} icon={icons.distance} label="距离" arrow="inline" />
          </GroupTools>
          <Caption>连接与约束</Caption>
        </Group>
        <Group $w={117}>
          <GroupTools>
            <Tool w={46} icon={icons.grid} label="网格" />
            <SmallColumn $w={34}>
              <Small name="区域填充" icon={smallIcons.areaFill} arrow />
              <Small name="区域边界" icon={smallIcons.areaHatch} arrow />
            </SmallColumn>
            <SmallColumn $w={32}>
              <Small name="建筑" icon={smallIcons.building} arrow />
              <Small name="重叠" icon={smallIcons.overlap} arrow />
            </SmallColumn>
          </GroupTools>
          <Caption>区域</Caption>
        </Group>
        <Group $w={170} $pad={3}>
          <GroupTools>
            <Tool w={53} icon={icons.wallPanel} label="墙体面板" arrow="below" />
            <Tool w={53} icon={icons.floorPanel} label="水平面板" arrow="below" />
            <Tool w={53} icon={icons.truss} label="桁架操作" arrow="below" />
          </GroupTools>
          <Caption>面板</Caption>
        </Group>
        <Group $w={159} $pad={3}>
          <GroupTools>
            <Tool w={54} icon={icons.reference} label="参考图纸" arrow="below" />
            <Tool w={40} icon={icons.detail} label="细节" arrow="inline" />
            <Tool w={56} icon={icons.advanced} label="高级建模" arrow="below" />
          </GroupTools>
          <Caption>制图</Caption>
        </Group>
        <Group $w={53}>
          <GroupTools>
            <Tool w={50} icon={icons.tools} label="工具" arrow="inline" />
          </GroupTools>
        </Group>
      </Ribbon>

      <QuickBar>
        <button aria-label="保存">
          <svg width="14" height="14" viewBox="0 0 14 14">
            <path d="M1 1h12v12H1z" fill="#fff" stroke="#8458a8" strokeWidth="2" />
            <path d="M1 7h12v1.500H1zM3 9h8v4H3z" fill="#8458a8" />
            <path d="M5 10.500h2V14H5zM8 10.500h1.500V14H8z" fill="#fff" />
          </svg>
        </button>
        <button aria-label="自定义">
          <svg width="7" height="6" viewBox="0 0 7 6">
            <path d="M0 0h7v1H0zM1 3h5L3.500 6z" fill="#111" />
          </svg>
        </button>
      </QuickBar>

      <Main>
        <Browser>
          <BrowserTitle>项目文档浏览器</BrowserTitle>
          <TreeBox>
            <Tree />
          </TreeBox>
        </Browser>
        <Canvas>
          <FloorPlan />
          <CanvasBar>
            <ViewBar>
              {viewIcons.map(([name, icon]) => (
                <ViewButton key={name} aria-label={name}>
                  <svg width="31" height="31" viewBox="0 0 31 31">
                    {icon}
                  </svg>
                </ViewButton>
              ))}
            </ViewBar>
            <EditBar>
              {editIcons.map(([name, icon]) => (
                <EditButton key={name} aria-label={name} $on={name === "选择"}>
                  <svg width="32" height="30" viewBox="0 0 32 30">
                    {icon}
                  </svg>
                </EditButton>
              ))}
            </EditBar>
          </CanvasBar>
          <PairsPalette />
          <Tooltip role="tooltip">一层墙体</Tooltip>
        </Canvas>
      </Main>
    </Shell>
  );
}
